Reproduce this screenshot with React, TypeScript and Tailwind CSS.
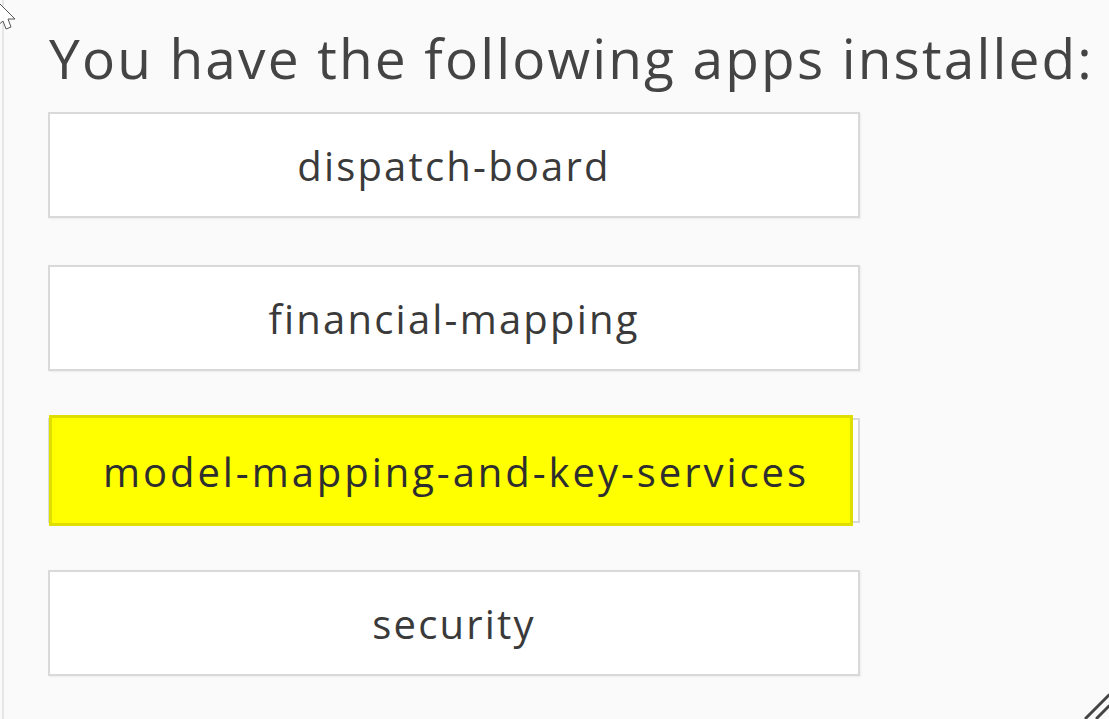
import React from "react";

const apps = ["dispatch-board", "financial-mapping", "model-mapping-and-key-services", "security"];

function Cursor() {
    return (
        <svg className="absolute left-0 top-0" width="20" height="40" viewBox="0 0 20 40">
            <path d="M-4 0 L15 19 L8 19 L11 27 L6 29 L3 21 L-3 26 Z" fill="#ffffff" stroke="#555555" strokeWidth="1" />
        </svg>
    );
}

function Grip() {
    return (
        <svg className="absolute right-0 bottom-0" width="26" height="30" viewBox="0 0 26 30">
            <path d="M3 29 L26 6" stroke="#444444" strokeWidth="3" strokeLinecap="round" />
            <path d="M14 29 L26 17" stroke="#444444" strokeWidth="3" strokeLinecap="round" />
        </svg>
    );
}

export default function App() {
    return (
        <div className="relative w-[1109px] h-[719px] overflow-hidden bg-[#fafafa]" style={{ fontFamily: '"Open Sans", sans-serif' }}>
            <div className="absolute left-[2px] top-0 bottom-0 w-[2px] bg-[#e6e6e6]"></div>
            <Cursor />
            <div className="pl-[48px] pt-[19px]">
                <h1 className="text-[55px] leading-[78px] text-[#444444] pl-[1px] tracking-[2.15px] whitespace-nowrap">You have the following apps installed:</h1>
                <div className="flex flex-col gap-[47px] mt-[15px] w-[812px]">
                    {apps.map((name, i) =>
                        i === 2 ? (
                            <div key={name} className="relative h-[108px] mt-[-3px]">
                                <div className="absolute left-0 right-0 top-[3px] bottom-0 bg-white border-2 border-[#d9d9d9]"></div>
                                <div className="absolute left-[1px] top-0 w-[804px] h-[111px] bg-[#ffff00] border-[3px] border-[#dede00] flex items-center justify-center pt-[2px] pl-[10px]">
                                    <span className="text-[40px] tracking-[2.95px] text-[#2e2e2e]">{name}</span>
                                </div>
                            </div>
                        ) : (
                            <div key={name} className="h-[106px] bg-white border-2 border-[#d9d9d9] shadow-[1px_1px_2px_rgba(0,0,0,0.06)] flex items-center justify-center pt-[2px]">
                                <span className="text-[40px] tracking-[2.2px] text-[#3a3a3a]">{name}</span>
                            </div>
                        )
                    )}
                </div>
            </div>
            <Grip />
        </div>
    );
}
